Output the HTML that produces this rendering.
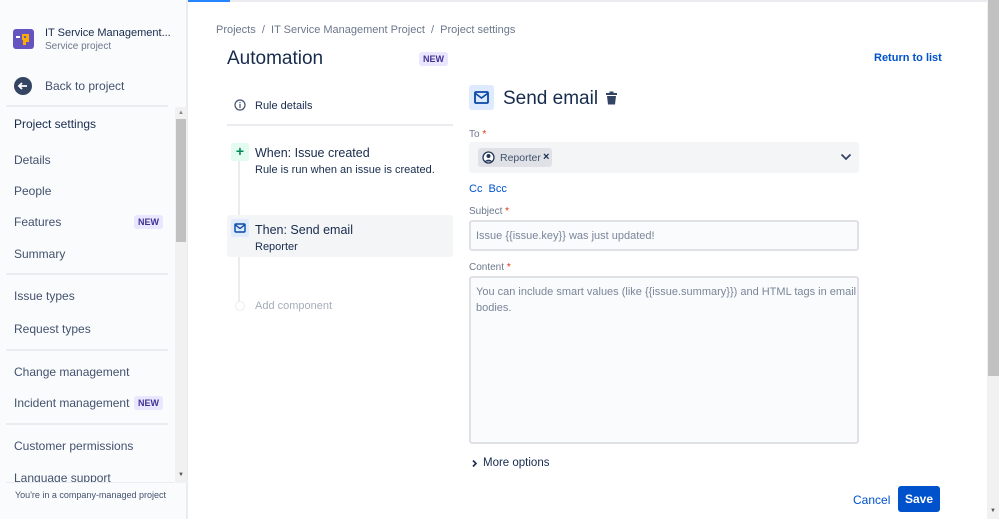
<!DOCTYPE html>
<html><head><meta charset="utf-8"><style>
*{box-sizing:border-box;margin:0;padding:0}
body{width:999px;height:519px;overflow:hidden;background:#fff;font-family:"Liberation Sans",sans-serif;color:#172b4d;position:relative}
.a{position:absolute;white-space:nowrap}
.sb{position:absolute;left:0;top:0;width:188px;height:519px;background:#fafbfc;border-right:2px solid #ebecf0}
.nav{font-size:12px;color:#42526e}
.hr{position:absolute;left:6px;width:162px;height:2px;background:#ebecf0}
.new{position:absolute;font-size:9px;font-weight:bold;color:#403294;background:#eae6ff;padding:2px 4px;border-radius:3px}
.lbl{font-size:10px;color:#6b778c}
.req{color:#de350b}
.inp{position:absolute;border:2px solid #dfe1e6;background:#fafbfc;border-radius:3px}
</style></head><body>
<div class="a" style="left:0;top:0;width:999px;height:2px;background:#ebecf0"></div>
<div class="a" style="left:178px;top:0;width:52px;height:2px;background:#2684ff"></div>
<div class="sb"></div>
<svg class="a" style="left:13px;top:29px" width="21" height="20" viewBox="0 0 21 20"><rect width="21" height="20" rx="3" fill="#6554c0"/><rect x="3" y="7" width="4" height="2" fill="#fff"/><path d="M9 5h7v8h-3v3h-3v-5h-1z" fill="#ffab00"/><rect x="11" y="7" width="2" height="2" fill="#6554c0"/></svg>
<div class="a" style="left:45px;top:27px;font-size:11px;color:#172b4d">IT Service Management...</div>
<div class="a" style="left:45px;top:41px;font-size:10px;color:#6b778c">Service project</div>
<svg class="a" style="left:14px;top:77px" width="18" height="18" viewBox="0 0 18 18"><circle cx="9" cy="9" r="9" fill="#344563"/><path d="M13 9H5M8 6L5 9l3 3" stroke="#fff" stroke-width="1.8" fill="none"/></svg>
<div class="a nav" style="left:45px;top:79px">Back to project</div>
<div class="hr" style="top:105px"></div>
<div class="a" style="left:175px;top:107px;width:12px;height:376px;background:#f1f1f1"></div>
<div class="a" style="left:176px;top:119px;width:10px;height:123px;background:#c1c1c1"></div>
<div class="a" style="left:178px;top:110px;font-size:6px;color:#888">▲</div>
<div class="a" style="left:178px;top:472px;font-size:6px;color:#555">▼</div>
<div class="a" style="left:14px;top:117px;font-size:12px;color:#172b4d">Project settings</div>
<div class="a nav" style="left:14px;top:153px">Details</div>
<div class="a nav" style="left:14px;top:184px">People</div>
<div class="a nav" style="left:14px;top:215px">Features</div><div class="new" style="left:134px;top:215px">NEW</div>
<div class="a nav" style="left:14px;top:247px">Summary</div>
<div class="hr" style="top:273px"></div>
<div class="a nav" style="left:14px;top:289px">Issue types</div>
<div class="a nav" style="left:14px;top:322px">Request types</div>
<div class="hr" style="top:349px"></div>
<div class="a nav" style="left:14px;top:365px">Change management</div>
<div class="a nav" style="left:14px;top:396px">Incident management</div><div class="new" style="left:134px;top:396px">NEW</div>
<div class="hr" style="top:423px"></div>
<div class="a nav" style="left:14px;top:439px">Customer permissions</div>
<div class="a nav" style="left:14px;top:471px;height:12px;overflow:hidden">Language support</div>
<div class="a" style="left:6px;top:482px;width:168px;height:1px;background:#ebecf0"></div>
<div class="a" style="left:15px;top:490px;font-size:9px;color:#42526e">You're in a company-managed project</div>

<div class="a" style="left:216px;top:24px;font-size:11px;color:#6b778c">Projects &nbsp;/&nbsp; IT Service Management Project &nbsp;/&nbsp; Project settings</div>
<div class="a" style="left:227px;top:48px;font-size:19px;color:#172b4d">Automation</div>
<div class="new" style="left:419px;top:52px">NEW</div>
<div class="a" style="left:874px;top:52px;font-size:11px;font-weight:bold;color:#0052cc">Return to list</div>

<svg class="a" style="left:234px;top:99px" width="12" height="12" viewBox="0 0 12 12"><circle cx="6" cy="6" r="5" stroke="#42526e" stroke-width="1.2" fill="none"/><rect x="5.4" y="5" width="1.2" height="4" fill="#42526e"/><rect x="5.4" y="3" width="1.2" height="1.2" fill="#42526e"/></svg>
<div class="a" style="left:255px;top:100px;font-size:11px;color:#172b4d">Rule details</div>
<div class="a" style="left:227px;top:124px;width:226px;height:2px;background:#ebecf0"></div>
<div class="a" style="left:238px;top:155px;width:2px;height:150px;background:#ebecf0"></div>
<div class="a" style="left:231px;top:143px;width:18px;height:18px;background:#e3fcef;border-radius:2px;color:#00875a;font-size:14px;text-align:center;line-height:17px;font-weight:bold">+</div>
<div class="a" style="left:255px;top:146px;font-size:12.5px">When: Issue created</div>
<div class="a" style="left:255px;top:164px;font-size:11px;color:#172b4d">Rule is run when an issue is created.</div>
<div class="a" style="left:227px;top:215px;width:226px;height:42px;background:#f4f5f7;border-radius:3px"></div>
<div class="a" style="left:231px;top:219px;width:18px;height:18px;background:#deebff;border-radius:2px"></div>
<svg class="a" style="left:234px;top:223px" width="12" height="10" viewBox="0 0 12 10"><rect x="1" y="1" width="10" height="8" rx="1" stroke="#0747a6" stroke-width="1.4" fill="none"/><path d="M1.5 2l4.5 3.5L10.5 2" stroke="#0747a6" stroke-width="1.3" fill="none"/></svg>
<div class="a" style="left:255px;top:223px;font-size:12.5px">Then: Send email</div>
<div class="a" style="left:255px;top:241px;font-size:11px">Reporter</div>
<div class="a" style="left:235px;top:301px;width:10px;height:10px;border:1.5px solid #ebecf0;border-radius:50%;background:#fff"></div>
<div class="a" style="left:255px;top:300px;font-size:11px;color:#a5adba">Add component</div>

<div class="a" style="left:469px;top:85px;width:25px;height:25px;background:#deebff;border-radius:3px"></div>
<svg class="a" style="left:474px;top:91px" width="15" height="13" viewBox="0 0 15 13"><rect x="1" y="1" width="13" height="11" rx="1" stroke="#0747a6" stroke-width="1.8" fill="none"/><path d="M1.5 2.5l6 4.5 6-4.5" stroke="#0747a6" stroke-width="1.6" fill="none"/></svg>
<div class="a" style="left:503px;top:88px;font-size:19px;color:#172b4d">Send email</div>
<svg class="a" style="left:605px;top:91px" width="13" height="14" viewBox="0 0 13 14"><rect x="1" y="2" width="11" height="2" fill="#344563"/><rect x="4.5" y="0.5" width="4" height="2" fill="#344563"/><path d="M2 5h9l-1 8.5H3z" fill="#344563"/></svg>
<div class="a lbl" style="left:469px;top:129px">To <span class="req">*</span></div>
<div class="a" style="left:469px;top:142px;width:390px;height:31px;background:#f4f5f7;border-radius:3px"></div>
<div class="a" style="left:478px;top:148px;width:74px;height:19px;background:#dfe1e6;border-radius:3px"></div>
<svg class="a" style="left:482px;top:151px" width="13" height="13" viewBox="0 0 13 13"><circle cx="6.5" cy="6.5" r="5.5" stroke="#253858" stroke-width="1.3" fill="#fff"/><circle cx="6.5" cy="5" r="2" fill="#253858"/><path d="M3 10.5c1-2.5 6-2.5 7 0" fill="#253858"/></svg>
<div class="a" style="left:500px;top:152px;font-size:10.5px;color:#42526e">Reporter</div>
<div class="a" style="left:543px;top:151px;font-size:11px;font-weight:bold;color:#172b4d">×</div>
<svg class="a" style="left:840px;top:153px" width="12" height="8" viewBox="0 0 12 8"><path d="M1.5 1.5L6 6l4.5-4.5" stroke="#344563" stroke-width="1.8" fill="none"/></svg>
<div class="a" style="left:469px;top:183px;font-size:11px;color:#0052cc">Cc &nbsp;Bcc</div>
<div class="a lbl" style="left:469px;top:206px">Subject <span class="req">*</span></div>
<div class="inp" style="left:469px;top:220px;width:390px;height:31px"></div>
<div class="a" style="left:476px;top:230px;font-size:11px;color:#7a869a">Issue {{issue.key}} was just updated!</div>
<div class="a lbl" style="left:469px;top:262px">Content <span class="req">*</span></div>
<div class="inp" style="left:469px;top:276px;width:390px;height:168px"></div>
<div class="a" style="left:476px;top:284px;font-size:11px;color:#7a869a;line-height:16px">You can include smart values (like {{issue.summary}}) and HTML tags in email<br>bodies.</div>
<svg class="a" style="left:471px;top:459px" width="7" height="9" viewBox="0 0 7 9"><path d="M2 1.5l3 3-3 3" stroke="#172b4d" stroke-width="1.6" fill="none"/></svg>
<div class="a" style="left:483px;top:457px;font-size:11.5px">More options</div>
<div class="a" style="left:853px;top:493px;font-size:12px;color:#0052cc">Cancel</div>
<div class="a" style="left:898px;top:486px;width:42px;height:26px;background:#0052cc;border-radius:3px;color:#fff;font-size:12px;font-weight:bold;text-align:center;line-height:26px">Save</div>

<div class="a" style="left:987px;top:0;width:12px;height:519px;background:#f1f1f1"></div>
<div class="a" style="left:988px;top:0;width:11px;height:376px;background:#c1c1c1"></div>
<div class="a" style="left:990px;top:508px;font-size:6px;color:#555">▼</div>
</body></html>
